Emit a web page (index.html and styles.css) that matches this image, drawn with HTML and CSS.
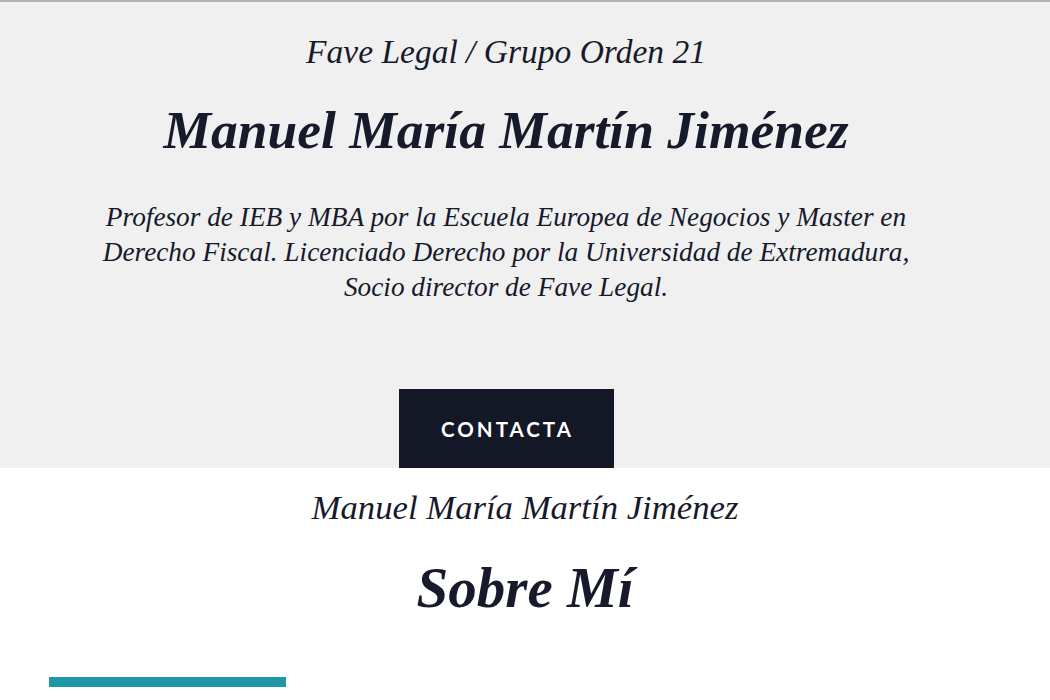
FILE: index.html
```html
<!DOCTYPE html>
<html lang="es">
<head>
<meta charset="utf-8">
<title>Manuel María Martín Jiménez</title>
<link rel="stylesheet" href="styles.css">
</head>
<body>
<section class="hero">
  <div class="hero-inner">
    <p class="kicker">Fave Legal / Grupo Orden 21</p>
    <h1 class="name">Manuel María Martín Jiménez</h1>
    <p class="bio">Profesor de IEB y MBA por la Escuela Europea de Negocios y Master en Derecho Fiscal. Licenciado Derecho por la Universidad de Extremadura, Socio director de Fave Legal.</p>
    <a class="btn" href="#">CONTACTA</a>
  </div>
</section>
<section class="about">
  <p class="sub">Manuel María Martín Jiménez</p>
  <h2 class="title">Sobre Mí</h2>
  <div class="bar"></div>
</section>
</body>
</html>
```
FILE: styles.css
```css
html, body {
  margin: 0;
  padding: 0;
  background: #ffffff;
}
body {
  font-family: "Liberation Serif", "Times New Roman", serif;
  color: #161a2b;
}
.hero {
  background: #f0f0f1;
  border-top: 2px solid #b3b3b3;
}
.hero-inner {
  display: flex;
  flex-direction: column;
  align-items: center;
  padding-right: 38px;
  padding-top: 30px;
}
.kicker {
  margin: 0;
  font-style: italic;
  font-size: 33.5px;
  line-height: 40px;
  font-weight: 400;
}
.name {
  margin: 28px 0 0;
  font-style: italic;
  font-weight: 700;
  font-size: 53.5px;
  line-height: 60px;
}
.bio {
  margin: 40px 0 0;
  max-width: 840px;
  text-align: center;
  font-style: italic;
  font-size: 27.3px;
  line-height: 35px;
}
.btn {
  margin-top: 84px;
  width: 215px;
  height: 79px;
  background: #131726;
  color: #ffffff;
  display: flex;
  align-items: center;
  justify-content: center;
  text-decoration: none;
  font-family: Lato, "Liberation Sans", sans-serif;
  font-weight: 700;
  font-size: 20.5px;
  letter-spacing: 3px;
  padding-left: 3px;
  box-sizing: border-box;
}
.about {
  display: flex;
  flex-direction: column;
  align-items: center;
  padding-top: 20px;
}
.sub {
  margin: 0;
  font-style: italic;
  font-size: 34.7px;
  line-height: 40px;
}
.title {
  margin: 28px 0 0;
  font-style: italic;
  font-weight: 700;
  font-size: 57px;
  line-height: 64px;
}
.bar {
  align-self: flex-start;
  margin: 57px 0 0 49px;
  width: 237px;
  height: 10px;
  background: #1e98a6;
}
```
